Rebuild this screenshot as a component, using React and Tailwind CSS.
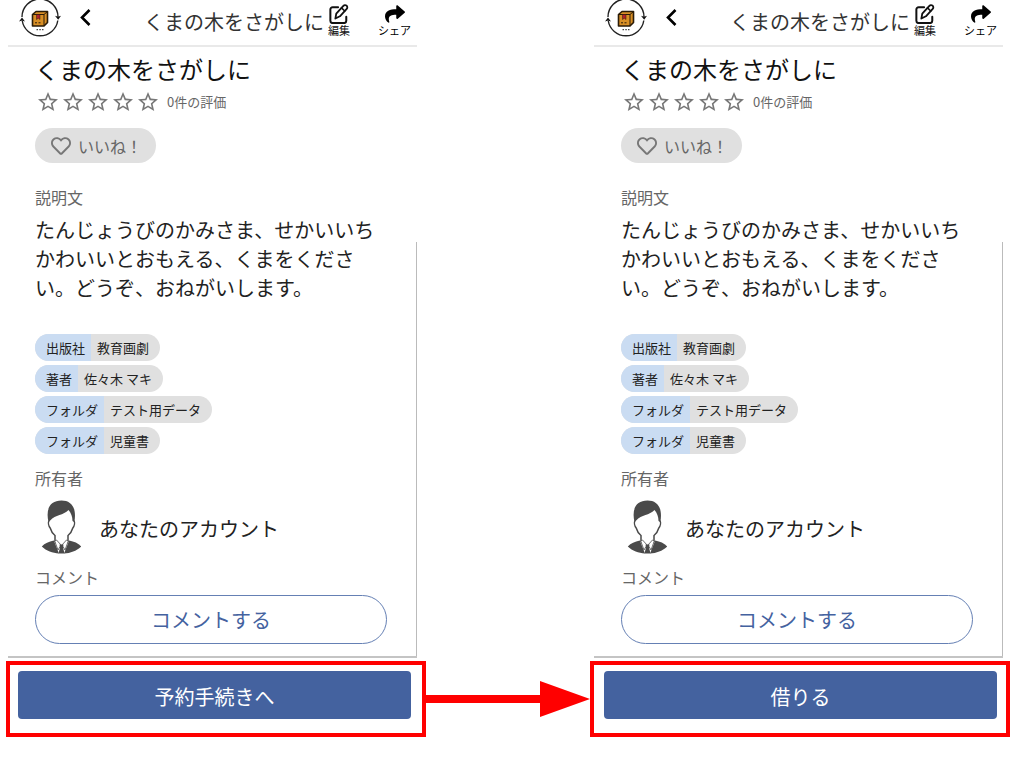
import React from "react";
import { FaRegHeart, FaShare } from "react-icons/fa";
import { MdStarBorder } from "react-icons/md";

const tags = [
  { label: "出版社", value: "教育画劇" },
  { label: "著者", value: "佐々木 マキ" },
  { label: "フォルダ", value: "テスト用データ" },
  { label: "フォルダ", value: "児童書" },
];

const Logo = () => (
  <svg width="44" height="45" viewBox="0 0 44 45" fill="none" aria-hidden="true">
    <path d="M4 17A18 18 0 0 1 40 17" stroke="#222" strokeWidth="1.4" />
    <path d="M4.2 20.500A18 18 0 0 0 39.800 20.500" stroke="#222" strokeWidth="1.4" />
    <path d="M37 15.800l3 1 3-1-2.800 4z" fill="#111" />
    <path d="M1 21.500l3-4 3 4-3-1z" fill="#111" />
    <path
      d="M14.500 14.500L18 11.500h11.500v11l-3.500 3.500H14.500z"
      fill="#d98f25"
      stroke="#2b1c08"
      strokeWidth="1.6"
      strokeLinejoin="round"
    />
    <path d="M14.500 14.500H26l3.500-3M26 14.500V26" stroke="#2b1c08" strokeWidth="1" />
    <path d="M18.500 14.500h3.500v5l-1.700-1.300-1.800 1.300z" fill="#b3202c" stroke="#2b1c08" strokeWidth="0.500" />
    <path d="M17 22.800h2M20.500 22.800h2" stroke="#2b1c08" strokeWidth="1" />
    <path d="M18.500 29.700h1.500M21.300 29.700h1.500M24 29.700h1.500" stroke="#444" strokeWidth="1.2" />
  </svg>
);

const EditIcon = () => (
  <svg
    width="22"
    height="20"
    viewBox="0 1 24 22"
    fill="none"
    stroke="currentColor"
    strokeWidth="2.2"
    strokeLinecap="round"
    strokeLinejoin="round"
    aria-hidden="true"
  >
    <path d="M11 4.500H5A2.500 2.500 0 0 0 2.500 7v12.500A2.500 2.500 0 0 0 5 22h12.500a2.500 2.500 0 0 0 2.500-2.500V15" />
    <path d="M16.800 3a2.500 2.500 0 0 1 3.700 3.400L13 14.500 8 17l1-5.500z" strokeWidth="2" />
    <path d="M14.800 5.300l3.500 3.400" strokeWidth="1.8" />
  </svg>
);

const Avatar = () => (
  <svg width="40" height="54" viewBox="0 0 40 54" aria-hidden="true">
    <path
      d="M8 20.500c-1 2-.5 5.500 1.200 7.500 1 3.500 2.800 6 4.800 7.500v6l6.500 7 6.500-7v-6c2-1.500 3.800-4 4.800-7.500 1.700-2 2.200-5.500 1.200-7.500"
      fill="#fff"
      stroke="#4a4a4a"
      strokeWidth="1.5"
    />
    <path
      d="M7.500 22C4.500 9 9 .5 20.500.5c10 0 15.500 7.500 12.800 21.500l-1.800-1c0-4.500-1.500-8-4-11-5 5.500-13 4.500-18.300 10.500z"
      fill="#4a4a4a"
    />
    <path d="M.8 46.500c3-3.500 7-4.700 12-6l5.200 13c-6.500-.5-12.500-2.500-17.200-7z" fill="#4a4a4a" />
    <path d="M40.200 46.500c-3-3.500-7-4.700-12-6L23 53.500c6.500-.5 12.500-2.500 17.200-7z" fill="#4a4a4a" />
    <path d="M20.500 45.500l-5-5.500-1.800 1 3.300 9 2-3.500M20.500 45.500l5-5.500 1.800 1-3.300 9-2-3.500" fill="#fff" stroke="#4a4a4a" strokeWidth="0.8" />
    <path d="M18.500 44.500h4l-.5 3 1.500 6h-6l1.500-6z" fill="#4a4a4a" />
  </svg>
);

const Arrow = () => (
  <div className="flex w-[164px] shrink-0 flex-col justify-end">
    <div className="flex h-19 items-center">
      <svg width="164" height="38" viewBox="0 0 164 38" fill="#f00" aria-hidden="true">
        <path d="M0 15h114V1l50 18-50 18V23H0z" />
      </svg>
    </div>
  </div>
);

const SectionLabel = ({ children, className }) => (
  <h2 className={`text-base leading-6 text-[#666] ${className}`}>{children}</h2>
);

const Screen = ({ action, screenClass, actionClass }) => (
  <div className="min-w-0 flex-1">
    <div className={`relative border-b-2 border-[#c4c4c4] ${screenClass}`}>
      <header className="flex h-[47px] items-start border-b-2 border-[#e9e9e9] pr-1.5 pl-2.5">
        <Logo />
        <button type="button" aria-label="戻る" className="mt-2 ml-4 text-black">
          <svg width="16" height="19" viewBox="0 0 16 19" fill="none" aria-hidden="true">
            <path d="M11.500 2L4 9.500l7.500 7.500" stroke="currentColor" strokeWidth="2.600" />
          </svg>
        </button>
        <p className="mt-2 ml-auto text-xl leading-7 whitespace-nowrap text-[#333]">
          くまの木をさがしに
        </p>
        <button type="button" className="mt-1 ml-1 flex flex-col items-center text-[#111]">
          <EditIcon />
          <span className="text-[11px] leading-3">編集</span>
        </button>
        <button type="button" className="mt-1 ml-7 flex flex-col items-center text-black">
          <span className="flex h-5 items-center">
            <FaShare size={20} />
          </span>
          <span className="text-[11px] leading-3">シェア</span>
        </button>
      </header>

      <main className="pt-1.5 pr-[30px] pb-3 pl-[27px]">
        <h1 className="text-2xl leading-8 text-[#111]">くまの木をさがしに</h1>

        <div className="mt-1.5 flex h-[22px] items-center gap-px pl-px text-[#777]">
          {[1, 2, 3, 4, 5].map((n) => (
            <MdStarBorder key={n} size={24} />
          ))}
          <span className="ml-1.5 text-[13px] leading-5 text-[#666]">0件の評価</span>
        </div>

        <button
          type="button"
          className="mt-[15px] flex h-[35px] items-center gap-[7px] rounded-full bg-[#e0e0e0] pr-3.5 pl-4 text-base text-[#666]"
        >
          <FaRegHeart size={20} className="text-[#777]" />
          いいね！
        </button>

        <SectionLabel className="mt-[22px]">説明文</SectionLabel>
        <p className="mt-1.5 text-xl leading-[29px] text-[#222]">
          たんじょうびのかみさま、せかいいちかわいいとおもえる、くまをください。どうぞ、おねがいします。
        </p>

        <ul className="mt-8 flex flex-col items-start gap-1 text-[13px] leading-[26px] text-[#222]">
          {tags.map((tag) => (
            <li key={tag.value} className="flex overflow-hidden rounded-full bg-[#e0e0e0]">
              <span className="bg-[#cadcf2] pt-px pr-1.5 pl-[11px]">{tag.label}</span>
              <span className="pt-px pr-[11px] pl-1.5">{tag.value}</span>
            </li>
          ))}
        </ul>

        <SectionLabel className="mt-3">所有者</SectionLabel>
        <div className="mt-2.5 flex items-center gap-[18px] pl-1.5">
          <Avatar />
          <span className="pt-1 text-xl leading-7 text-[#222]">あなたのアカウント</span>
        </div>

        <SectionLabel className="mt-[11px]">コメント</SectionLabel>
        <button
          type="button"
          className="mt-1.5 h-[49px] w-full rounded-full border border-[#6580b4] pt-px text-xl text-[#44629f]"
        >
          コメントする
        </button>
      </main>

      {/* page edge */}
      <div className="absolute top-[242px] right-0 bottom-0 w-px bg-[#bbb]" />
    </div>

    <div className={`mt-[3px] border-4 border-[#f00] pt-1.5 pb-3.5 ${actionClass}`}>
      <button type="button" className="h-12 w-full rounded bg-[#44629f] pt-1 text-xl text-white">
        {action}
      </button>
    </div>
  </div>
);

const App = () => {
  return (
    <div
      lang="ja"
      className="flex min-h-screen items-start bg-white pr-1 pl-1.5 font-['Noto_Sans_CJK_JP',sans-serif]"
    >
      <div className="flex w-full">
        <Screen
          action="予約手続きへ"
          screenClass="mr-[9px] ml-0.5"
          actionClass="pr-[11px] pl-2"
        />
        <Arrow />
        <Screen action="借りる" screenClass="mr-[7px] ml-1" actionClass="pr-[9px] pl-2.5" />
      </div>
    </div>
  );
};

export default App;
